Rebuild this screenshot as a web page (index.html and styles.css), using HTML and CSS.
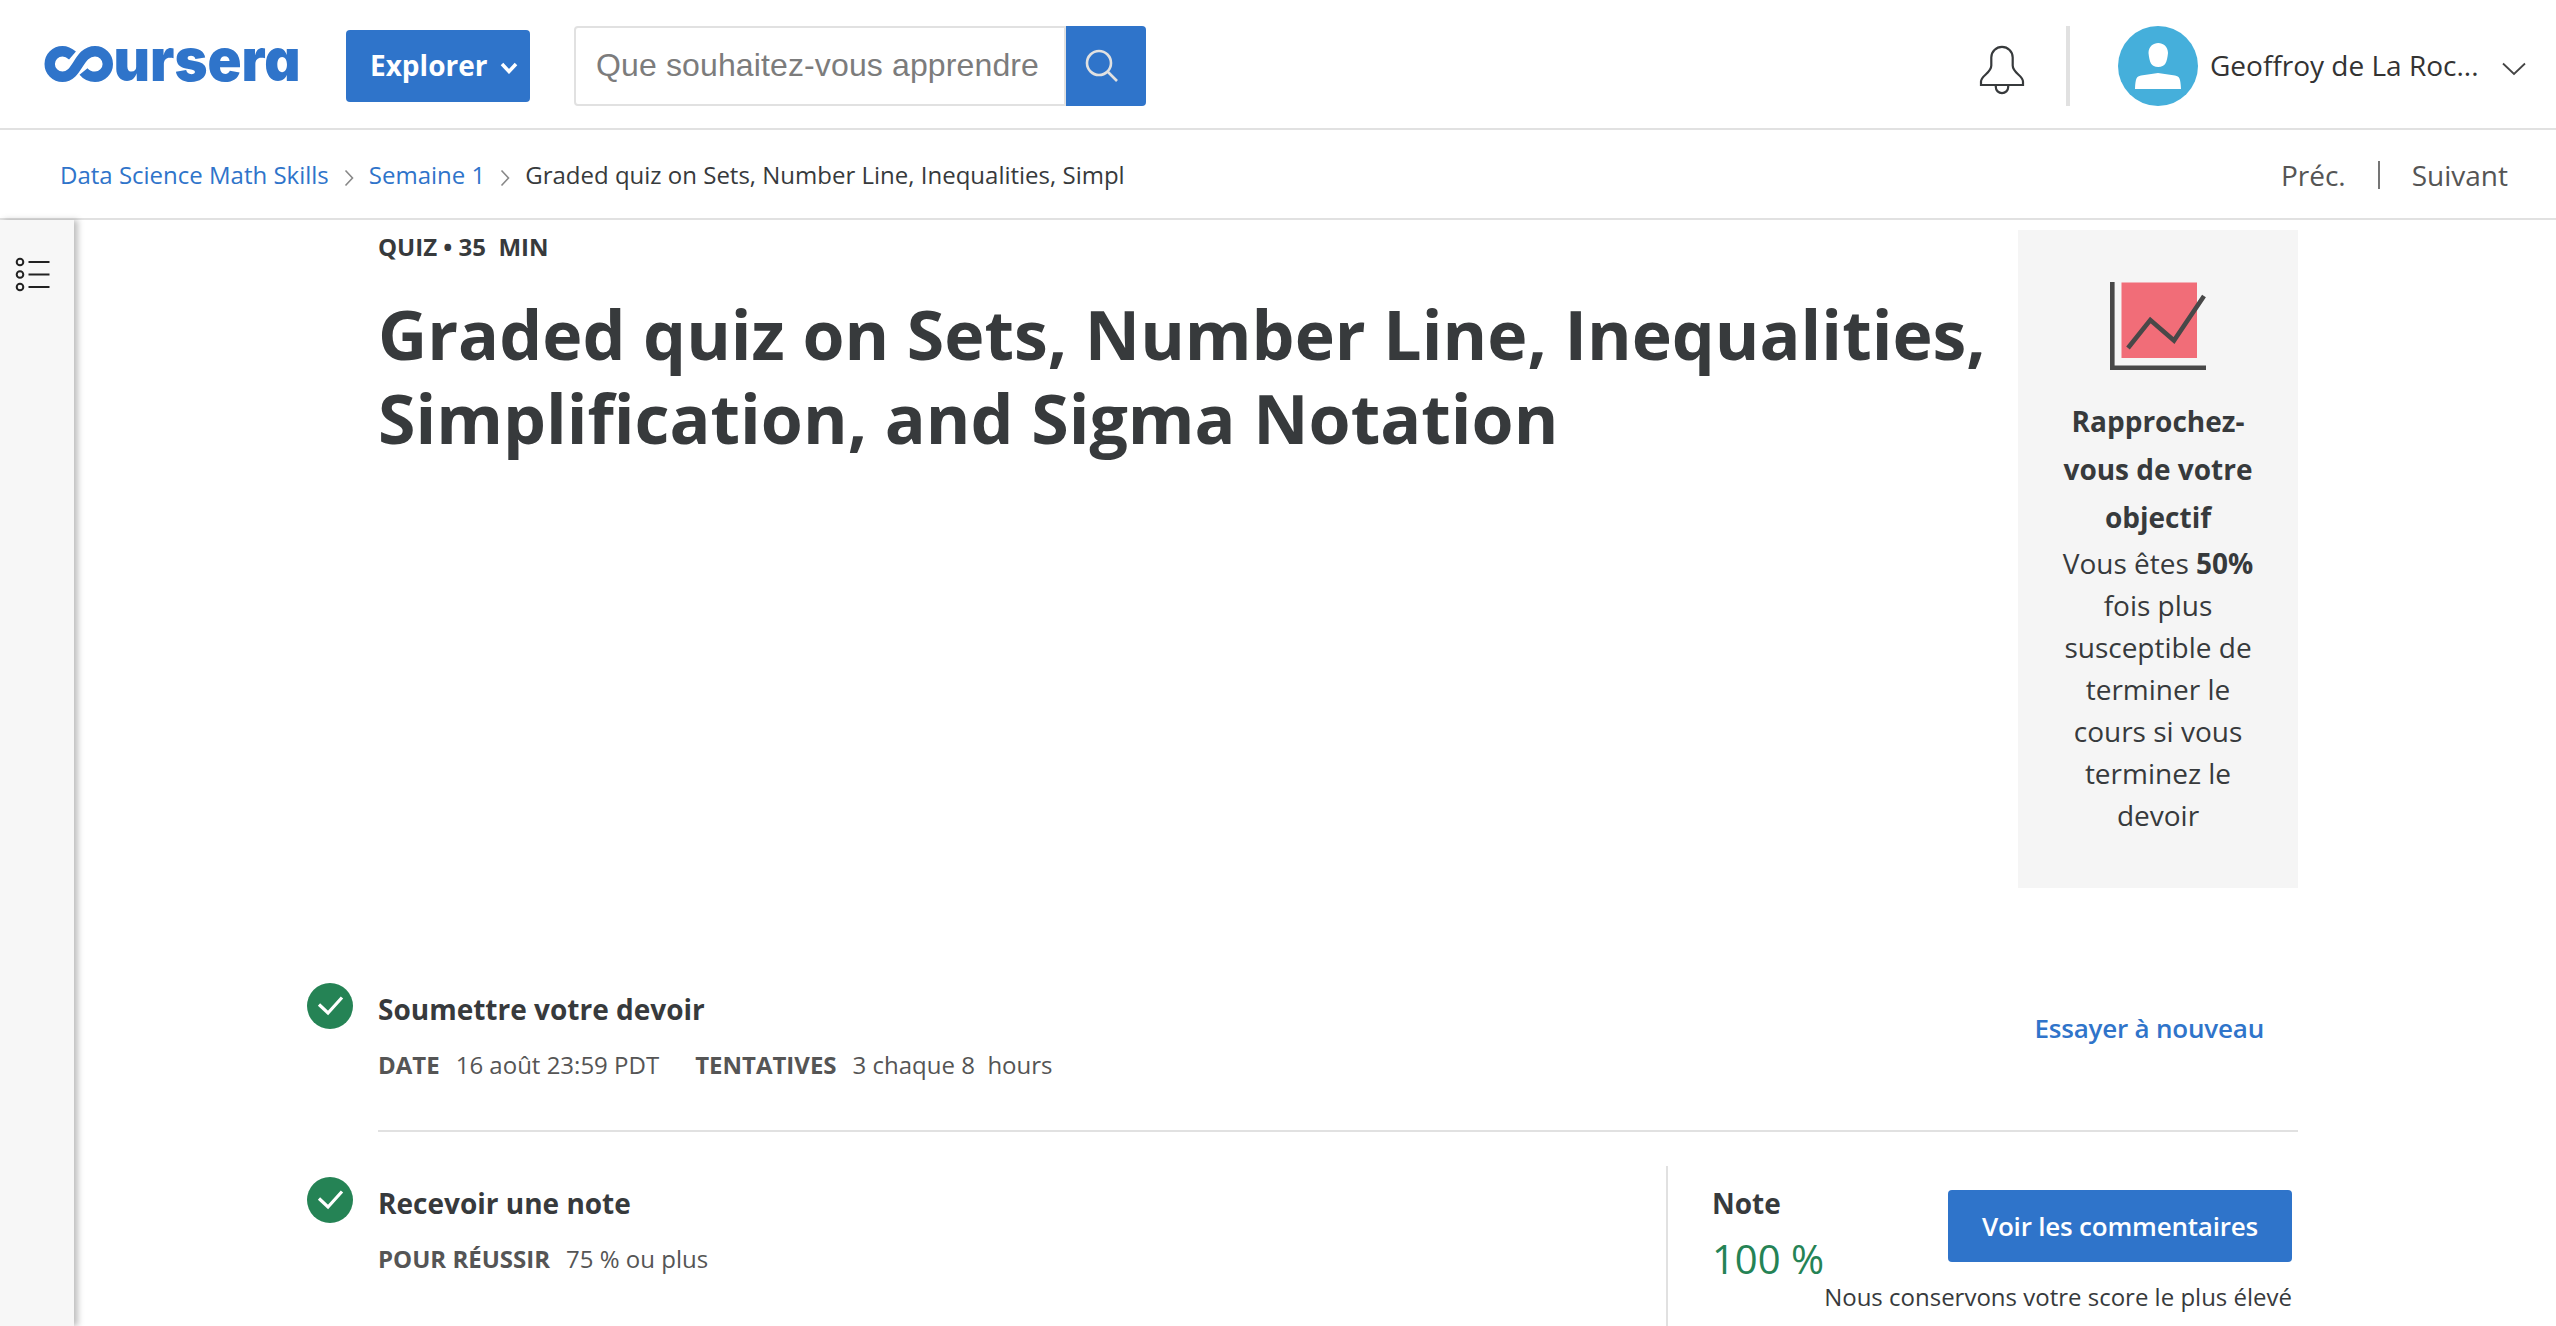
FILE: index.html
```html
<!DOCTYPE html>
<html lang="fr">
<head>
<meta charset="utf-8">
<title>Graded quiz | Coursera</title>
<link rel="stylesheet" href="styles.css">
</head>
<body>
<header class="topbar">
  <svg class="logo" width="256" height="40" viewBox="0 0 256 40" role="img" aria-label="coursera">
    <path class="logo-loop" d="M28.500 9.500C24.500 6 20 5.200 18.500 5.200A12.800 12.800 0 0 0 18.500 30.800C34 30.800 34 5.200 51 5.200A12.800 12.800 0 0 1 51 30.800C46 30.800 42 28.500 39.500 25.500"/>
    <text class="logo-text" x="69.500" y="34.500" textLength="187" lengthAdjust="spacingAndGlyphs">ursera</text>
  </svg>
  <button class="explore">Explorer
    <svg width="18" height="12" viewBox="0 0 18 12"><path d="M2 2l7 7.500L16 2"/></svg>
  </button>
  <div class="search">
    <div class="search-field">Que souhaitez-vous apprendre</div>
    <button class="search-button" aria-label="Rechercher">
      <svg width="34" height="34" viewBox="0 0 34 34"><circle cx="14" cy="14" r="12"/><path d="M22.500 22.500L32 32"/></svg>
    </button>
  </div>
  <div class="account">
    <svg class="bell" width="46" height="50" viewBox="0 0 46 50"><path d="M2 40V36.500C2 30.500 12.300 28 12.300 20.500V12.500A10.700 10.700 0 0 1 33.700 12.500V20.500C33.700 28 44 30.500 44 36.500V40ZM16.800 40V42A6.200 6.200 0 0 0 29.200 42V40"/></svg>
    <span class="account-rule"></span>
    <svg class="avatar" width="80" height="80" viewBox="0 0 80 80"><circle cx="40" cy="40" r="40" fill="#45afdb"/><path fill="#fff" d="M30.500 27C30.500 13.500 50 13.500 50 27C49 36 47.500 41 40.200 41C33 41 31.500 36 30.500 27ZM17 63C17.500 52 18.500 50.500 23 49.500L40 47L57 49.500C61.500 50.500 62.500 52 63 63Z"/></svg>
    <span class="account-name">Geoffroy de La Roc...</span>
    <svg class="caret" width="24" height="14" viewBox="0 0 24 14"><path d="M1 1.500l11 10.500L23 1.500"/></svg>
  </div>
</header>
<nav class="crumbs">
  <a>Data Science Math Skills</a>
  <svg width="10" height="18" viewBox="0 0 10 18"><path d="M1.500 1.500l7 7.500l-7 7.500"/></svg>
  <a>Semaine 1</a>
  <svg width="10" height="18" viewBox="0 0 10 18"><path d="M1.500 1.500l7 7.500l-7 7.500"/></svg>
  <span>Graded quiz on Sets, Number Line, Inequalities, Simpl</span>
  <div class="pager"><span>Préc.</span><i></i><span>Suivant</span></div>
</nav>
<div class="body">
  <aside class="rail">
    <svg width="36" height="36" viewBox="0 0 36 36"><g class="rings"><circle cx="6" cy="6" r="3.300"/><circle cx="6" cy="18.500" r="3.300"/><circle cx="6" cy="31" r="3.300"/></g><path d="M14.500 6h21M14.500 18.500h21M14.500 31h21"/></svg>
  </aside>
  <main class="content">
    <section class="intro">
      <div class="heading">
        <p class="kind">QUIZ • 35  MIN</p>
        <h1>Graded quiz on Sets, Number Line, Inequalities, Simplification, and Sigma Notation</h1>
      </div>
      <aside class="goal">
        <svg width="98" height="90" viewBox="0 0 98 90"><rect x="12.500" y="2.500" width="75.500" height="75.500" fill="#f16d78" stroke="none"/><path d="M3.300 2V87.700H97M19 68L41.300 40L65 60.500L95 16"/></svg>
        <h2>Rapprochez-vous de votre objectif</h2>
        <p>Vous êtes <b>50%</b> fois plus susceptible de terminer le cours si vous terminez le devoir</p>
      </aside>
    </section>
    <section class="step">
      <svg class="check" width="46" height="46" viewBox="0 0 46 46"><circle cx="23" cy="23" r="23"/><path d="M12 21.500l9 8.500L35 14.500"/></svg>
      <div class="step-text">
        <h3>Soumettre votre devoir</h3>
        <p><b>DATE</b><span>16 août 23:59 PDT</span><b>TENTATIVES</b><span>3 chaque 8  hours</span></p>
      </div>
      <a class="retry">Essayer à nouveau</a>
    </section>
    <section class="step step-grade">
      <svg class="check" width="46" height="46" viewBox="0 0 46 46"><circle cx="23" cy="23" r="23"/><path d="M12 21.500l9 8.500L35 14.500"/></svg>
      <div class="step-text">
        <h3>Recevoir une note</h3>
        <p><b>POUR RÉUSSIR</b><span>75 % ou plus</span></p>
      </div>
      <div class="grade">
        <div class="score"><h3>Note</h3><strong>100 %</strong></div>
        <div class="feedback">
          <button>Voir les commentaires</button>
          <p>Nous conservons votre score le plus élevé</p>
        </div>
      </div>
    </section>
  </main>
</div>
</body>
</html>
```
FILE: styles.css
```css
* { box-sizing: border-box; }
body {
  margin: 0;
  height: 1326px;
  overflow: hidden;
  display: flex;
  flex-direction: column;
  background: #fff;
  color: #373a3c;
  font: 28px/42px "Open Sans", sans-serif;
}
h1, h2, h3, p { margin: 0; }
button { border: 0; padding: 0; font: inherit; color: #fff; background: #2f74ca; }
svg { flex: none; fill: none; }

.topbar {
  flex: none;
  height: 130px;
  display: flex;
  align-items: flex-start;
  padding: 26px 30px 0 44px;
  border-bottom: 2px solid #e1e1e1;
}
.logo { margin-top: 20px; overflow: visible; }
.logo-loop { stroke: #2f74ca; stroke-width: 10.400px; }
.logo-text {
  font: 900 59px Inter, sans-serif;
  font-feature-settings: "cv11";
  fill: #2f74ca;
}
.explore {
  display: flex;
  align-items: center;
  gap: 13px;
  width: 184px;
  height: 72px;
  margin: 4px 0 0 46px;
  padding: 0 0 2px 24px;
  border-radius: 4px;
  font-weight: 700;
}
.explore svg { margin-top: 5px; stroke: #fff; stroke-width: 3.500px; }
.search { display: flex; width: 572px; height: 80px; margin-left: 44px; }
.search-field {
  width: 492px;
  padding: 0 0 2px 20px;
  border: 2px solid #e1e1e1;
  border-radius: 4px 0 0 4px;
  font: 32px/74px "Liberation Sans", sans-serif;
  letter-spacing: .13px;
  color: #7c7c7c;
  white-space: nowrap;
}
.search-button {
  display: flex;
  width: 80px;
  padding: 23px 0 0 19px;
  border-radius: 0 4px 4px 0;
}
.search-button svg { stroke: #e1e1e1; stroke-width: 2.600px; }
.account { display: flex; align-items: flex-start; margin-left: auto; }
.bell { margin-top: 19px; stroke: #373a3c; stroke-width: 2.200px; }
.account-rule { width: 4px; height: 80px; margin: 0 48px 0 41px; background: #e1e1e1; }
.account-name { width: 304px; padding: 18px 0 0 12px; color: #333; white-space: nowrap; }
.caret { margin-top: 36px; stroke: #444; stroke-width: 1.800px; }

.crumbs {
  flex: none;
  height: 90px;
  display: flex;
  align-items: center;
  padding: 1px 48px 0 60px;
  border-bottom: 2px solid #e1e1e1;
  font-size: 24px;
}
.crumbs a { color: #2f74ca; }
.crumbs svg { margin: 6px 15px 0; stroke: #888; stroke-width: 1.600px; }
.pager {
  display: flex;
  align-items: center;
  margin-left: auto;
  padding-top: 1px;
  font-size: 28px;
  color: #555;
}
.pager i { width: 2px; height: 28px; margin: 0 32px; background: #757575; }

.body { flex: 1; min-height: 0; display: flex; }
.rail {
  flex: none;
  width: 74px;
  padding: 36px 0 0 14px;
  background: #f7f7f7;
  box-shadow: 4px 0 6px rgba(0, 0, 0, .25);
}
.rail svg { stroke: #222; stroke-width: 2px; }
.content { width: 1991px; margin-left: 233px; padding-top: 10px; }
.intro { display: flex; justify-content: space-between; height: 738px; margin-left: 71px; }
.heading { width: 1640px; }
.kind { font-size: 24px; line-height: 34px; font-weight: 700; white-space: pre; }
h1 { margin-top: 28px; font-size: 68px; line-height: 84px; }
.goal {
  width: 280px;
  height: 658px;
  padding: 50px 36px 0;
  background: #f5f5f5;
  text-align: center;
}
.goal svg { display: block; margin: 0 auto 27px; stroke: #484848; stroke-width: 4.600px; }
h2 { margin-bottom: 1px; font-size: 28px; line-height: 48px; }

.step { display: flex; height: 164px; }
.check { margin-top: 15px; stroke: #fff; stroke-width: 3.200px; }
.check circle { fill: #258355; stroke: none; }
.step-text { flex: 1; margin-left: 25px; padding-top: 20px; }
.step:not(.step-grade) { background: linear-gradient(#e1e1e1, #e1e1e1) 71px 100% / 1920px 2px no-repeat; }
h3 { font-size: 28px; line-height: 42px; }
.step-text p { display: flex; margin-top: 14px; font-size: 24px; color: #555; white-space: pre; }
.step-text p b { margin-right: 16px; }
.step-text p span { margin-right: 36px; }
.retry { margin: 39px 34px 0 0; font-size: 26px; font-weight: 600; letter-spacing: -.2px; color: #2f74ca; }
.step-grade { height: 196px; margin-top: 30px; }
.grade {
  width: 632px;
  display: flex;
  justify-content: space-between;
  margin-top: 4px;
  padding: 16px 6px 0 44px;
  border-left: 2px solid #e1e1e1;
}
.score { width: 100px; white-space: nowrap; }
.score strong { display: block; margin-top: 7px; font-size: 40px; line-height: 56px; font-weight: 400; color: #258355; }
.feedback { display: flex; flex-direction: column; align-items: flex-end; padding-top: 8px; }
.feedback button { width: 344px; height: 72px; border-radius: 4px; font-size: 26px; font-weight: 600; letter-spacing: -.2px; }
.feedback p { margin-top: 14px; font-size: 24px; white-space: nowrap; }
```
